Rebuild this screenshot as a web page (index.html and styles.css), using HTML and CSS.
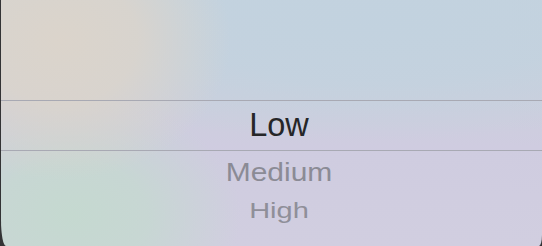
FILE: index.html
```html
<!DOCTYPE html>
<html>
<head>
<meta charset="utf-8">
<link rel="stylesheet" href="styles.css">
</head>
<body>
<div class="panel">
  <div class="top"></div>
  <div class="rule"></div>
  <div class="row selected">Low</div>
  <div class="rule"></div>
  <div class="row medium">Medium</div>
  <div class="row high">High</div>
</div>
</body>
</html>
```

FILE: styles.css
```css
html, body {
  margin: 0;
  padding: 0;
  height: 100%;
  overflow: hidden;
  background: #333335;
}
.panel {
  margin-left: 1px;
  width: 541px;
  height: 246px;
  border-bottom-left-radius: 5px 26px;
  border-bottom-right-radius: 3px 11px;
  overflow: hidden;
  font-family: "Liberation Sans", Arial, sans-serif;
  display: flex;
  flex-direction: column;
  background:
    radial-gradient(ellipse 170px 140px at 60px 40px, rgba(219,212,203,1) 0%, rgba(219,212,203,0.85) 45%, rgba(219,212,203,0) 100%),
    radial-gradient(ellipse 170px 120px at 70px 215px, rgba(197,217,208,1) 0%, rgba(197,217,208,0.8) 45%, rgba(197,217,208,0) 100%),
    radial-gradient(ellipse 420px 120px at 370px 20px, rgba(194,210,223,1) 0%, rgba(194,210,223,0.8) 50%, rgba(194,210,223,0) 100%),
    linear-gradient(180deg, #c8d4de 0%, #cccfdd 40%, #cfcce0 60%, #d1cee0 100%);
}
.top {
  height: 100px;
  flex: none;
}
.rule {
  height: 1px;
  flex: none;
  background: #a8a9b3;
}
.row {
  flex: none;
  text-align: center;
  padding-left: 15px;
  white-space: nowrap;
}
.selected {
  height: 49px;
  line-height: 49px;
  font-size: 32.5px;
  color: #262628;
}
.medium {
  height: 38px;
  line-height: 38px;
  margin-top: 1px;
  font-size: 30px;
  color: #8b8b95;
  transform: scaleY(0.88);
  transform-origin: 50% 29.4px;
}
.high {
  height: 34px;
  line-height: 34px;
  margin-top: 1px;
  font-size: 29px;
  color: #8f8f99;
  transform: scaleY(0.73);
  transform-origin: 50% 27px;
}
```
